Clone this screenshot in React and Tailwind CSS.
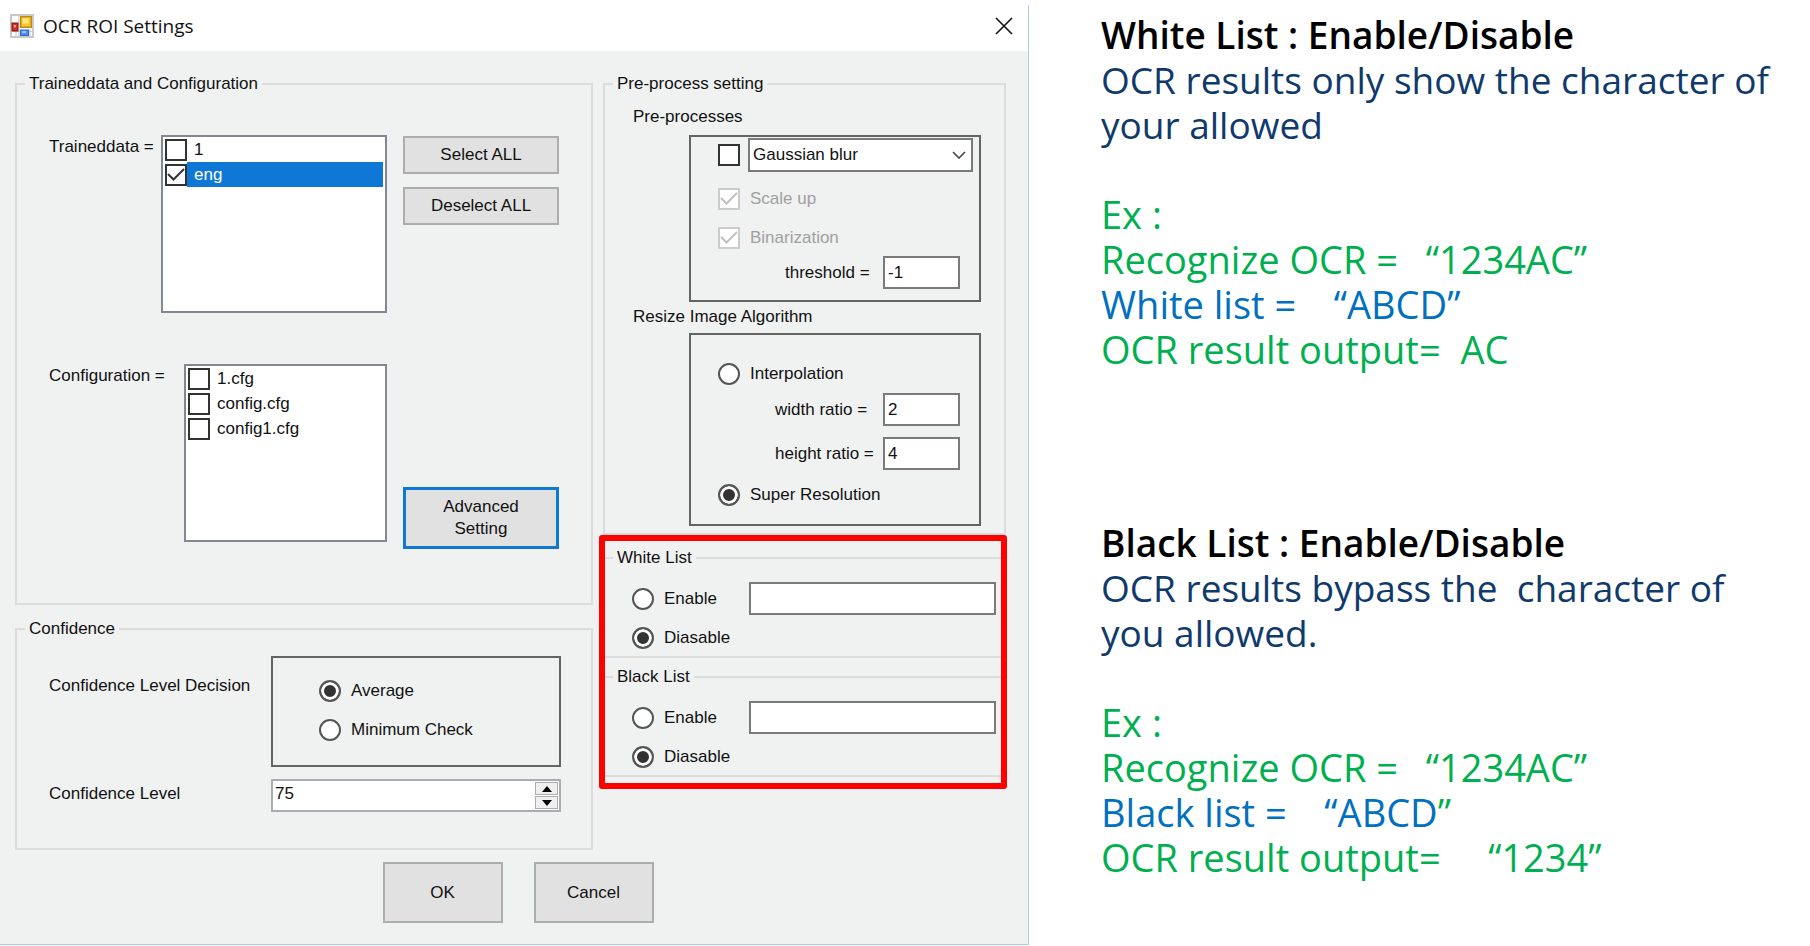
import { useId } from "react";

function CheckBox({ label, checked, disabled, labelClass = "", hidden }) {
  return (
    <label className={`flex items-center ${labelClass}`}>
      <span className="grid shrink-0">
        <input
          type="checkbox"
          defaultChecked={checked}
          disabled={disabled}
          aria-label={hidden}
          className="col-start-1 row-start-1 size-[22px] appearance-none border-2 border-[#333333] bg-white disabled:border-[#cccccc]"
        />
        {checked && (
          <svg viewBox="0 0 22 22" className={`pointer-events-none col-start-1 row-start-1 size-[22px] ${disabled ? "text-[#c0c0c0]" : "text-[#333333]"}`}>
            <path d="M3 10 L8.5 15.5 L19 5" fill="none" stroke="currentColor" strokeWidth="2" />
          </svg>
        )}
      </span>
      {label}
    </label>
  );
}

function Radio({ name, label, checked }) {
  return (
    <label className="flex h-[22px] items-center gap-[10px]">
      <input
        type="radio"
        name={name}
        defaultChecked={checked}
        className="size-[22px] shrink-0 appearance-none rounded-full border-2 border-[#555555] bg-white checked:bg-[#333333] checked:shadow-[inset_0_0_0_3px_#ffffff]"
      />
      {label}
    </label>
  );
}

function Group({ title, className = "", children }) {
  return (
    <fieldset className={`min-w-0 border-[#dcdcdc] ${className}`}>
      <legend className="ml-2 px-1 leading-6">{title}</legend>
      {children}
    </fieldset>
  );
}

function ListItem({ label, checked, selected }) {
  return (
    <li className="flex h-[25px] items-center">
      <CheckBox
        checked={checked}
        labelClass="w-full"
        label={
          <span className={`flex-1 pl-[7px] leading-[25px] ${selected ? "bg-[#0f78d7] text-white" : ""}`}>{label}</span>
        }
      />
    </li>
  );
}

function ListBox({ children }) {
  return <ul className="h-[178px] min-w-0 flex-1 border-2 border-[#828790] bg-white pr-[2px] pl-[2px]">{children}</ul>;
}

function Button({ className = "", children }) {
  return <button type="button" className={`bg-[#e1e1e1] text-center ${className}`}>{children}</button>;
}

function NumberField({ label, value }) {
  const id = useId();
  return (
    <div className="flex items-center">
      <label htmlFor={id} className="w-[108px] shrink-0">{label}</label>
      <input id={id} defaultValue={value} className="h-[33px] w-[77px] border-2 border-[#7a7a7a] bg-white px-[3px]" />
    </div>
  );
}

function FilterGroup({ title, name, className = "" }) {
  return (
    <Group title={title} className={`border-y-2 pb-[7px] ${className}`}>
      <div className="flex items-start gap-4 pt-3 pr-[5px] pl-[27px]">
        <div className="flex w-[101px] flex-col gap-[17px] pt-[6px]">
          <Radio name={name} label="Enable" />
          <Radio name={name} label="Diasable" checked />
        </div>
        <input aria-label={title} className="h-[33px] min-w-0 flex-1 border-2 border-[#7a7a7a] bg-white px-1" />
      </div>
    </Group>
  );
}

function AppIcon() {
  return (
    <svg viewBox="0 0 24 24" className="size-6">
      <rect x="1" y="1" width="22" height="22" fill="#fff" stroke="#c8c8c8" strokeWidth="2" />
      <path d="M9 2v20M2 17.5h20M6 17.5v5M20 15v7" stroke="#c9ccd0" strokeWidth="1.2" />
      <rect x="10.7" y="2.7" width="10.6" height="10.6" fill="#f8c62d" stroke="#b98a14" strokeWidth="1.4" />
      <rect x="12.5" y="4.5" width="6" height="5" fill="#ffe680" />
      <rect x="2.2" y="9.2" width="5.6" height="7.6" fill="#d8352a" stroke="#98190f" strokeWidth="1.4" />
      <rect x="3.8" y="11" width="2" height="2.4" fill="#f6a39b" />
      <rect x="10.5" y="16" width="8" height="5.5" fill="#4f8df0" stroke="#2f68cc" strokeWidth="1" />
      <rect x="12" y="17" width="4" height="2" fill="#9cc2ff" />
    </svg>
  );
}

function Dialog() {
  return (
    <form className="mt-[5px] border-r border-b border-[#a9cdec] bg-[#f0f1f1] font-['Liberation_Sans',Arial,sans-serif] text-[17px] leading-[22px] text-[#111111]">
      <header className="flex h-[46px] items-center gap-[9px] bg-white pr-[15px] pb-[5px] pl-[10px]">
        <AppIcon />
        <h1 className="flex-1 font-['Open_Sans','Noto_Sans',sans-serif] text-[19px]">OCR ROI Settings</h1>
        <button type="button" aria-label="Close" className="grid size-[18px] place-items-center">
          <svg viewBox="0 0 18 18" className="size-[18px]"><path d="M1 1 L17 17 M17 1 L1 17" stroke="#111" strokeWidth="1.6" /></svg>
        </button>
      </header>

      <div className="grid grid-cols-[578fr_408fr] items-start gap-[6px] pt-[21px] pr-[21px] pl-[15px]">
        <div className="flex min-w-0 flex-col gap-3">
          <Group title="Traineddata and Configuration" className="border-2 pb-[54px]">
            <div className="flex px-8 pt-[39px]">
              <span className="w-28 shrink-0 pt-px">Traineddata =</span>
              <ListBox>
                <ListItem label="1" />
                <ListItem label="eng" checked selected />
              </ListBox>
              <div className="ml-4 flex w-[156px] shrink-0 flex-col gap-[13px] pt-px">
                <Button className="h-[38px] border-2 border-[#adadad]">Select ALL</Button>
                <Button className="h-[38px] border-2 border-[#adadad]">Deselect ALL</Button>
              </div>
            </div>
            <div className="mt-[51px] flex px-8">
              <span className="w-[135px] shrink-0 pt-px">Configuration =</span>
              <ListBox>
                <ListItem label="1.cfg" />
                <ListItem label="config.cfg" />
                <ListItem label="config1.cfg" />
              </ListBox>
              <div className="ml-4 flex w-[156px] shrink-0 flex-col pt-[123px]">
                <Button className="h-[62px] border-[3px] border-[#0f78d7] px-6">Advanced Setting</Button>
              </div>
            </div>
          </Group>

          <Group title="Confidence" className="border-2 pb-9">
            <div className="grid grid-cols-[222px_1fr] gap-y-3 pt-[15px] pr-[30px] pl-8">
              <span className="pt-[19px]">Confidence Level Decision</span>
              <div className="flex h-[111px] flex-col justify-center gap-[17px] border-2 border-[#646464] pb-[3px] pl-[46px]">
                <Radio name="decision" label="Average" checked />
                <Radio name="decision" label="Minimum Check" />
              </div>
              <label htmlFor="level" className="pt-1">Confidence Level</label>
              <div className="flex h-[33px] border-2 border-[#abadb3] bg-white pr-px">
                <input id="level" defaultValue="75" className="min-w-0 flex-1 px-[2px] pb-1" />
                <div className="flex w-[23px] flex-col justify-between py-px">
                  <button type="button" aria-label="Increase" className="grid h-[13px] place-items-center border border-[#acacac] bg-[#f0f0f0]">
                    <svg viewBox="0 0 10 6" className="h-[6px] w-[10px]"><path d="M0 6 L5 0 L10 6Z" /></svg>
                  </button>
                  <button type="button" aria-label="Decrease" className="grid h-[13px] place-items-center border border-[#acacac] bg-[#f0f0f0]">
                    <svg viewBox="0 0 10 6" className="h-[6px] w-[10px]"><path d="M0 0 L5 6 L10 0Z" /></svg>
                  </button>
                </div>
              </div>
            </div>
          </Group>
        </div>

        <div className="min-w-0">
          <Group title="Pre-process setting" className="mr-px ml-1 border-2 pb-[7px]">
            <div className="pt-[10px] pr-[23px] pl-7">
              <h2>Pre-processes</h2>
              <div className="mt-[7px] ml-[56px] h-[167px] border-2 border-[#646464] pt-px pr-[6px] pl-[27px]">
                <div className="flex items-center gap-2">
                  <CheckBox hidden="Apply filter" />
                  <div className="grid min-w-0 flex-1 items-center">
                    <select aria-label="Filter" className="col-start-1 row-start-1 h-[34px] w-full appearance-none border-2 border-[#7a7a7a] bg-white pl-[3px]">
                      <option>Gaussian blur</option>
                    </select>
                    <svg viewBox="0 0 14 8" className="pointer-events-none col-start-1 row-start-1 mr-[7px] h-2 w-[14px] justify-self-end"><path d="M1 1 L7 7 L13 1" fill="none" stroke="#444" strokeWidth="1.6" /></svg>
                  </div>
                </div>
                <div className="mt-4 flex flex-col gap-[17px] text-[#a0a0a0]">
                  <CheckBox label="Scale up" checked disabled labelClass="h-[22px] gap-[10px]" />
                  <CheckBox label="Binarization" checked disabled labelClass="h-[22px] gap-[10px]" />
                </div>
                <div className="mt-[7px] flex justify-end pr-[13px]">
                  <NumberField label={<span className="block pl-[10px]">threshold =</span>} value="-1" />
                </div>
              </div>
              <h2 className="mt-1">Resize Image Algorithm</h2>
              <div className="mt-[5px] ml-[56px] h-[193px] border-2 border-[#646464] pt-7 pr-[19px] pl-[27px]">
                <Radio name="resize" label="Interpolation" />
                <div className="mt-2 mb-[14px] flex flex-col items-end gap-[11px]">
                  <NumberField label="width ratio =" value="2" />
                  <NumberField label="height ratio =" value="4" />
                </div>
                <Radio name="resize" label="Super Resolution" checked />
              </div>
            </div>
          </Group>

          <section className="rounded-[3px] border-[6px] border-[#ff0000] pt-[5px] pb-[6px]">
            <FilterGroup title="White List" name="white" />
            <FilterGroup title="Black List" name="black" className="mt-[7px]" />
          </section>
        </div>
      </div>

      <div className="flex justify-center gap-[31px] pt-3 pb-[21px] pl-2">
        <Button className="h-[61px] w-[120px] border-2 border-[#adadad]">OK</Button>
        <Button className="h-[61px] w-[120px] border-2 border-[#adadad]">Cancel</Button>
      </div>
    </form>
  );
}

function Quoted({ children }) {
  return <span className="ml-2">{children}</span>;
}

function Notes({ title, body, list, output, className = "" }) {
  return (
    <section className={className}>
      <h2 className="font-semibold text-black">{title}</h2>
      {body.map((line) => <p key={line} className="text-[#0f3a6b]">{line}</p>)}
      <div className="mt-[45px] text-[38px]">
        <p>Ex :</p>
        <p>{"Recognize OCR =  "}<Quoted>{"“1234AC”"}</Quoted></p>
        <p className="text-[#0070c0]">{list}</p>
        <p>{output}</p>
      </div>
    </section>
  );
}

export default function App() {
  return (
    <main className="grid grid-cols-[1029fr_781fr] items-start bg-white">
      <Dialog />
      <div className="min-w-0 pt-3 pl-[72px] font-['Open_Sans','Noto_Sans',sans-serif] text-[37px] leading-[45px] whitespace-pre text-[#00b050]">
        <Notes
          title="White List : Enable/Disable"
          body={["OCR results only show the character of", "your allowed"]}
          list={<>{"White list =   "}<Quoted>{"“ABCD”"}</Quoted></>}
          output={"OCR result output=  AC"}
        />
        <Notes
          className="mt-[148px]"
          title="Black List : Enable/Disable"
          body={["OCR results bypass the  character of", "you allowed."]}
          list={<>{"Black list =   "}<Quoted>{"“ABCD"}<span className="text-[#00b050]">”</span></Quoted></>}
          output={<>{"OCR result output=    "}<Quoted>{"“1234”"}</Quoted></>}
        />
      </div>
    </main>
  );
}
